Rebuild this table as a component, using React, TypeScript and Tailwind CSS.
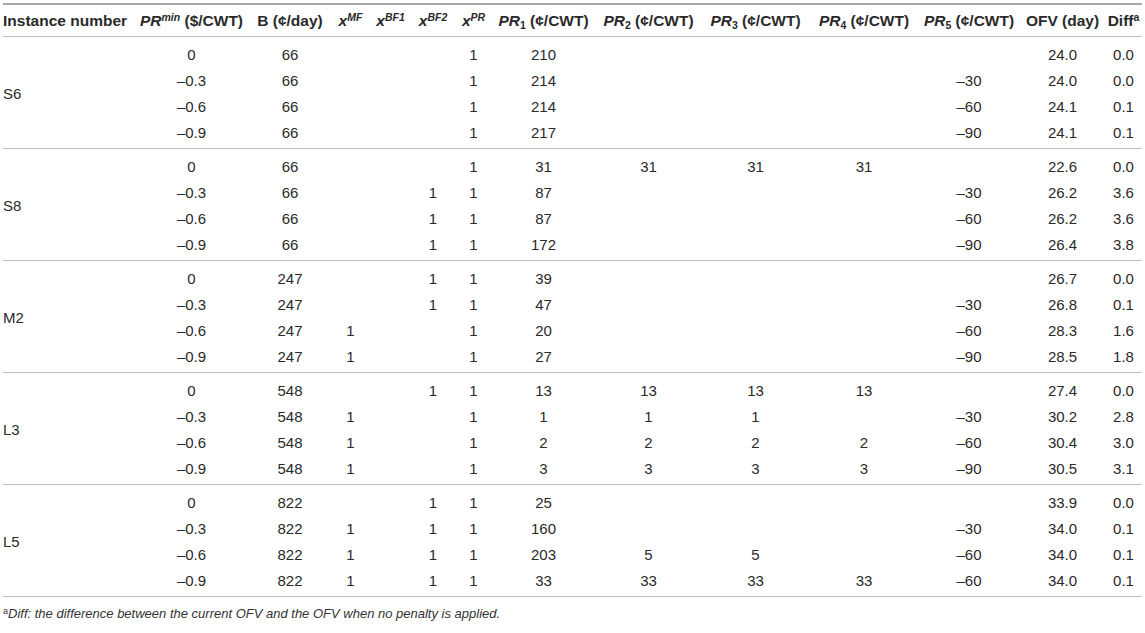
const cols =
  'grid grid-cols-[130px_117px_80px_41px_39px_46px_35px_105px_105px_109px_108px_102px_85px_37px]';

type Row = string[];

const groups: { name: string; rows: Row[] }[] = [
  {
    name: 'S6',
    rows: [
      ['0', '66', '', '', '', '1', '210', '', '', '', '', '24.0', '0.0'],
      ['–0.3', '66', '', '', '', '1', '214', '', '', '', '–30', '24.0', '0.0'],
      ['–0.6', '66', '', '', '', '1', '214', '', '', '', '–60', '24.1', '0.1'],
      ['–0.9', '66', '', '', '', '1', '217', '', '', '', '–90', '24.1', '0.1'],
    ],
  },
  {
    name: 'S8',
    rows: [
      ['0', '66', '', '', '', '1', '31', '31', '31', '31', '', '22.6', '0.0'],
      ['–0.3', '66', '', '', '1', '1', '87', '', '', '', '–30', '26.2', '3.6'],
      ['–0.6', '66', '', '', '1', '1', '87', '', '', '', '–60', '26.2', '3.6'],
      ['–0.9', '66', '', '', '1', '1', '172', '', '', '', '–90', '26.4', '3.8'],
    ],
  },
  {
    name: 'M2',
    rows: [
      ['0', '247', '', '', '1', '1', '39', '', '', '', '', '26.7', '0.0'],
      ['–0.3', '247', '', '', '1', '1', '47', '', '', '', '–30', '26.8', '0.1'],
      ['–0.6', '247', '1', '', '', '1', '20', '', '', '', '–60', '28.3', '1.6'],
      ['–0.9', '247', '1', '', '', '1', '27', '', '', '', '–90', '28.5', '1.8'],
    ],
  },
  {
    name: 'L3',
    rows: [
      ['0', '548', '', '', '1', '1', '13', '13', '13', '13', '', '27.4', '0.0'],
      ['–0.3', '548', '1', '', '', '1', '1', '1', '1', '', '–30', '30.2', '2.8'],
      ['–0.6', '548', '1', '', '', '1', '2', '2', '2', '2', '–60', '30.4', '3.0'],
      ['–0.9', '548', '1', '', '', '1', '3', '3', '3', '3', '–90', '30.5', '3.1'],
    ],
  },
  {
    name: 'L5',
    rows: [
      ['0', '822', '', '', '1', '1', '25', '', '', '', '', '33.9', '0.0'],
      ['–0.3', '822', '1', '', '1', '1', '160', '', '', '', '–30', '34.0', '0.1'],
      ['–0.6', '822', '1', '', '1', '1', '203', '5', '5', '', '–60', '34.0', '0.1'],
      ['–0.9', '822', '1', '', '1', '1', '33', '33', '33', '33', '–60', '34.0', '0.1'],
    ],
  },
];

function Sup({ children, italic = true }: { children: React.ReactNode; italic?: boolean }) {
  return <sup className={`text-[10.5px] font-bold ${italic ? 'italic' : ''}`}>{children}</sup>;
}

function PR({ n }: { n: number }) {
  return (
    <>
      <i>PR</i>
      <sub className="text-[10.5px]">{n}</sub> (¢/CWT)
    </>
  );
}

function H({ children }: { children: React.ReactNode }) {
  return (
    <div className="flex justify-center">
      <span className="whitespace-nowrap">{children}</span>
    </div>
  );
}

export default function App() {
  return (
    <div
      className="w-[1145px] h-[633px] bg-white px-[3px] pt-[3px] text-[#2a2a2a]"
      style={{ fontFamily: '"Liberation Sans", Arial, sans-serif' }}
    >
      <div className="border-t-2 border-[#a8a8a8]">
        {/* header */}
        <div className={`${cols} h-[32px] items-center text-[15.5px] font-bold border-b border-[#bdbdbd]`}>
          <div className="whitespace-nowrap">Instance number</div>
          <H>
            <i>PR</i>
            <Sup>min</Sup> ($/CWT)
          </H>
          <H>B (¢/day)</H>
          <H>
            <i>x</i>
            <Sup>MF</Sup>
          </H>
          <H>
            <i>x</i>
            <Sup>BF1</Sup>
          </H>
          <H>
            <i>x</i>
            <Sup>BF2</Sup>
          </H>
          <H>
            <i>x</i>
            <Sup>PR</Sup>
          </H>
          <H><PR n={1} /></H>
          <H><PR n={2} /></H>
          <H><PR n={3} /></H>
          <H><PR n={4} /></H>
          <H><PR n={5} /></H>
          <H>OFV (day)</H>
          <H>
            Diff<Sup italic={false}>a</Sup>
          </H>
        </div>

        {groups.map((g) => (
          <div key={g.name} className={`${cols} pt-[5px] pb-[2px] border-b border-[#bdbdbd] text-[15px]`}>
            <div className="row-span-4 self-center">{g.name}</div>
            {g.rows.map((r, i) =>
              r.map((v, j) => (
                <div key={`${i}-${j}`} className="h-[26px] flex items-center justify-center">
                  {v}
                </div>
              ))
            )}
          </div>
        ))}
      </div>

      <p className="mt-[7px] text-[13px] italic text-[#333]">
        <sup className="not-italic text-[9px]">a</sup>Diff: the difference between the current OFV and the OFV when no
        penalty is applied.
      </p>
    </div>
  );
}
